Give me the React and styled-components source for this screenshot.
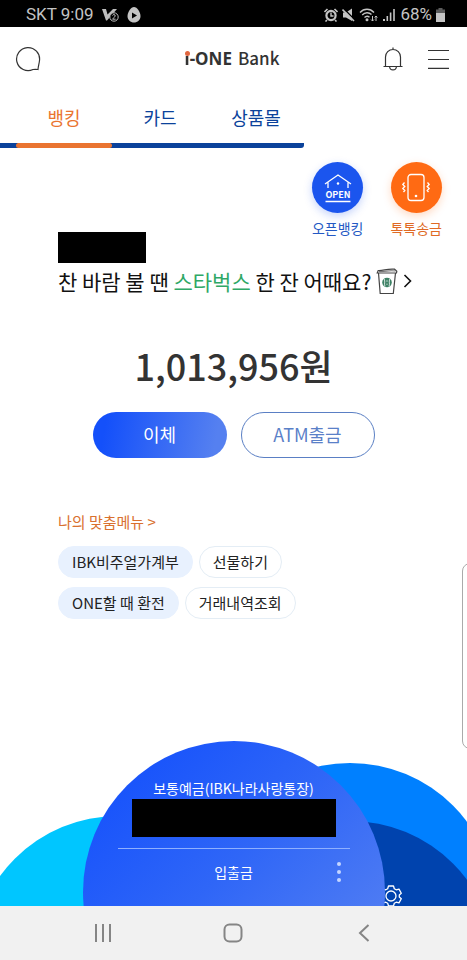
import React, { useState } from 'react'
import styled, { createGlobalStyle } from 'styled-components'

const tabs = ['뱅킹', '카드', '상품몰']

const menuRows = [
  [
    { label: 'IBK비주얼가계부', filled: true },
    { label: '선물하기', filled: false },
  ],
  [
    { label: 'ONE할 때 환전', filled: true },
    { label: '거래내역조회', filled: false },
  ],
]

export default function App() {
  const [active, setActive] = useState('뱅킹')

  return (
    <>
      <GlobalStyle />
      <Page>
        <StatusBar>
          <StatusGroup $gap={8}>
            <span>SKT 9:09</span>
            <VaccineIcon />
            <PlayIcon />
          </StatusGroup>
          <StatusGroup $gap={4}>
            <AlarmIcon />
            <MuteIcon />
            <WifiIcon />
            <SignalIcon />
            <span>68%</span>
            <BatteryIcon />
          </StatusGroup>
        </StatusBar>

        <Header>
          <IconButton aria-label="상담">
            <svg width="26" height="26" viewBox="0 0 26 26" fill="none" stroke="#333" strokeWidth="1.2">
              <path d="M23 23.500 C21.500 23.300 19.800 23.200 18 23.500 A11.500 11.500 0 1 1 24.500 14.500 C24.200 17.500 23.200 20.500 23 23.500 Z" />
            </svg>
          </IconButton>
          <Logo>
            <b><LogoI>i</LogoI>-ONE</b> <LogoBank>Bank</LogoBank>
          </Logo>
          <HeaderRight>
            <IconButton aria-label="알림">
              <svg width="20" height="24" viewBox="0 0 20 24" fill="none" stroke="#333" strokeWidth="1.2">
                <path d="M10 0.500 V2.500 M2.500 19.500 V10 A7.500 7.500 0 0 1 17.500 10 V19.500 M0.500 19.500 H19.500 M6.500 19.500 C7 24 13 24 13.500 19.500" />
              </svg>
            </IconButton>
            <IconButton aria-label="전체메뉴">
              <svg width="22" height="20" viewBox="0 0 22 20" stroke="#333" strokeWidth="1.2">
                <path d="M1 1.500 H22 M1 10.500 H22 M1 19.300 H22" />
              </svg>
            </IconButton>
          </HeaderRight>
        </Header>

        <Tabs>
          {tabs.map((tab) => (
            <Tab key={tab} $active={tab === active} onClick={() => setActive(tab)}>
              {tab}
            </Tab>
          ))}
        </Tabs>

        <Main>
          <TopRow>
            <HiddenName />
            <Shortcuts>
              <Shortcut $color="#2459c4">
                <ShortcutCircle $color="#1b55ee">
                  <OpenBankIcon />
                </ShortcutCircle>
                오픈뱅킹
              </Shortcut>
              <Shortcut $color="#e06a25">
                <ShortcutCircle $color="#ff6a13">
                  <ShakePhoneIcon />
                </ShortcutCircle>
                톡톡송금
              </Shortcut>
            </Shortcuts>
          </TopRow>

          <Message href="#event">
            <span>찬 바람 불 땐 <Brand>스타벅스</Brand> 한 잔 어때요?</span>
            <CupIcon />
            <svg width="9" height="14" viewBox="0 0 9 14" fill="none" stroke="#111" strokeWidth="1.6">
              <path d="M1.500 1 L7.500 7 L1.500 13" />
            </svg>
          </Message>

          <Amount>1,013,956원</Amount>
          <Actions>
            <ActionButton $primary>이체</ActionButton>
            <ActionButton>ATM출금</ActionButton>
          </Actions>

          <MyMenu>
            <MyMenuTitle href="#menu">나의 맞춤메뉴 &gt;</MyMenuTitle>
            {menuRows.map((row, i) => (
              <ChipRow key={i}>
                {row.map((item) => (
                  <Chip key={item.label} $filled={item.filled}>{item.label}</Chip>
                ))}
              </ChipRow>
            ))}
          </MyMenu>
        </Main>

        <Wheel>
          <Circle $x={-116} $top={75} $size={292} $bg="#00c6ff" />
          <Circle $x={116} $top={22} $size={292} $bg="#0080ff" />
          <Circle $x={116} $top={80} $size={292} $bg="#0043ae" />
          <SettingsButton aria-label="설정">
            <GearIcon />
          </SettingsButton>
          <Circle $x={0} $top={0} $size={302} $bg="linear-gradient(135deg, #1a55fb 15%, #2f66f7 45%, #5580f2 85%)" />
          <Account>
            <AccountName>보통예금(IBK나라사랑통장)</AccountName>
            <HiddenNumber />
            <AccountFoot>
              <span>입출금</span>
              <MoreButton aria-label="더보기">
                <svg width="6" height="22" viewBox="0 0 6 22" fill="#c5d6ff">
                  <circle cx="3" cy="3" r="2" />
                  <circle cx="3" cy="11" r="2" />
                  <circle cx="3" cy="19" r="2" />
                </svg>
              </MoreButton>
            </AccountFoot>
          </Account>
        </Wheel>

        <SystemNav>
          <IconButton aria-label="최근 앱">
            <svg width="18" height="20" viewBox="0 0 18 20" stroke="#858585" strokeWidth="2">
              <path d="M2 1 V19 M9 1 V19 M16 1 V19" />
            </svg>
          </IconButton>
          <IconButton aria-label="홈">
            <svg width="20" height="20" viewBox="0 0 20 20" fill="none" stroke="#858585" strokeWidth="2">
              <rect x="1.500" y="1.500" width="17" height="17" rx="5" />
            </svg>
          </IconButton>
          <IconButton aria-label="뒤로">
            <svg width="12" height="20" viewBox="0 0 12 20" fill="none" stroke="#858585" strokeWidth="2">
              <path d="M10.500 2 L2 10 L10.500 18" />
            </svg>
          </IconButton>
        </SystemNav>

        <EdgeHandle />
      </Page>
    </>
  )
}

function VaccineIcon() {
  return (
    <svg width="17" height="14" viewBox="0 0 17 14" fill="none" stroke="#bdbdbd">
      <path d="M0 1 H4 L5.500 6.500 L11 1 H15 L5 12.500 H4 Z" fill="#bdbdbd" stroke="none" />
      <circle cx="12" cy="9" r="4.200" fill="#000" />
      <path d="M10.500 7.500 C11 6 13.500 6.300 13.200 8 C13 9.200 11 10 10.500 11.200 H13.600" />
    </svg>
  )
}

function PlayIcon() {
  return (
    <svg width="14" height="16" viewBox="0 0 14 16">
      <path d="M7 0 C10 0 13.500 5 13.500 9 C13.500 13 10.500 15.500 7 15.500 C3.500 15.500 0.500 13 0.500 9 C0.500 5 4 0 7 0 Z" fill="#c4c4c4" />
      <path d="M5 5.500 L10 8.500 L5 11.500 Z" fill="#000" />
    </svg>
  )
}

function AlarmIcon() {
  return (
    <svg width="14" height="14" viewBox="0 0 14 14">
      <circle cx="7" cy="7.500" r="4.600" fill="none" stroke="#c4c4c4" strokeWidth="2.200" />
      <path d="M0.500 4 L3.500 1 M13.500 4 L10.500 1 M3 12 L1.500 13.500 M11 12 L12.500 13.500" stroke="#c4c4c4" strokeWidth="1.600" />
      <path d="M7 4.500 V8 H9.500" fill="none" stroke="#c4c4c4" strokeWidth="1.400" />
    </svg>
  )
}

function MuteIcon() {
  return (
    <svg width="13" height="14" viewBox="0 0 13 14">
      <path d="M1 4.500 H4 L10 0.500 V13 L4 9.500 H1 Z" fill="#c4c4c4" />
      <path d="M1.500 0.500 L13 12" stroke="#000" strokeWidth="1.500" />
      <path d="M0.500 1.500 L12 13" stroke="#c4c4c4" strokeWidth="1.600" />
    </svg>
  )
}

function WifiIcon() {
  return (
    <svg width="19" height="14" viewBox="0 0 19 14" fill="none" stroke="#c4c4c4" strokeWidth="1.400">
      <path d="M1 4.500 C5 0.200 11 0.200 15 4.500 M3.200 7 C6 4 10 4 12.500 6.600 M5.500 9.500 C7 8 9 8 10.500 9.300" />
      <circle cx="8" cy="11.800" r="0.800" fill="#c4c4c4" />
      <path d="M13.500 8 V13 M12 11.500 L13.500 13 L15 11.500 M17 13 V8 M15.700 9.500 L17 8 L18.300 9.500" strokeWidth="1" />
    </svg>
  )
}

function SignalIcon() {
  return (
    <svg width="14" height="14" viewBox="0 0 14 14" fill="#c4c4c4">
      <path d="M1 11 h2 v2 h-2 z M4.500 8 h1.600 v5 h-1.600 z M7.800 4.500 h1.600 v8.500 h-1.600 z M11.200 1 h1.600 v12 h-1.600 z" />
    </svg>
  )
}

function BatteryIcon() {
  return (
    <svg width="9" height="14" viewBox="0 0 9 14">
      <path d="M2.500 0 H6.500 V1.500 H9 V5 H0 V1.500 H2.500 Z" fill="#5c5c5c" />
      <path d="M0 5 H9 V14 H0 Z" fill="#c4c4c4" />
    </svg>
  )
}

function OpenBankIcon() {
  return (
    <svg width="28" height="30" viewBox="0 0 28 30" fill="none" stroke="#fff" strokeWidth="1.300">
      <path d="M1 11 L14 2 L27 11 M4 9.500 V15 M24 9.500 V15 M1.500 28.500 H26.500" />
      <circle cx="14" cy="10.500" r="1.200" fill="#fff" stroke="none" />
      <text x="14" y="24.500" textAnchor="middle" fontFamily="'Noto Sans CJK KR', sans-serif" fontSize="9" fontWeight="700" fill="#fff" stroke="none">OPEN</text>
    </svg>
  )
}

function ShakePhoneIcon() {
  return (
    <svg width="30" height="29" viewBox="0 0 30 29" fill="none" stroke="#fff" strokeWidth="1.300">
      <rect x="7" y="1.500" width="16" height="26" rx="3" />
      <circle cx="15" cy="23" r="1.300" fill="#fff" stroke="none" />
      <path d="M3.500 9.500 L1.800 11.500 L3.800 13.500 L1.800 15.500 L3.800 17.500 L2.500 19 M26.500 9.500 L28.200 11.500 L26.200 13.500 L28.200 15.500 L26.200 17.500 L27.500 19" />
    </svg>
  )
}

function CupIcon() {
  return (
    <svg width="22" height="27" viewBox="0 0 22 27" fill="none" stroke="#444" strokeWidth="1.200">
      <path d="M2.500 5 L4.200 25.500 H17.300 L19.500 5" fill="#fff" />
      <path d="M1.200 5 L2.200 2.500 C8 2.800 10 0.600 18.500 1.200 L20.800 3.200 L20.500 4.800 Z" fill="#fff" />
      <path d="M3 3.500 C10 3.800 12 2 19.500 3" stroke="#777" />
      <circle cx="11" cy="14.500" r="4.800" fill="#3d8064" stroke="none" />
      <path d="M8.200 11 C9.500 14 7.800 15.500 9 18.500 M13.800 11 C12.500 14 14.200 15.500 13 18.500" stroke="#fff" strokeWidth="0.800" />
      <path d="M10 13 H12 M10.200 16.200 H11.800" stroke="#e6f2ec" strokeWidth="0.700" />
    </svg>
  )
}

function GearIcon() {
  return (
    <svg width="22" height="22" viewBox="0 0 22 22" fill="none" stroke="#fff" strokeWidth="1.300">
      <path d="M8.500 1 H13.500 L14.300 3.700 L16.200 4.800 L19 4.100 L21.300 8.200 L19.300 10 V12 L21.300 13.800 L19 17.900 L16.200 17.200 L14.300 18.300 L13.500 21 H8.500 L7.700 18.300 L5.800 17.200 L3 17.900 L0.700 13.800 L2.700 12 V10 L0.700 8.200 L3 4.100 L5.800 4.800 L7.700 3.700 Z" strokeLinejoin="round" />
      <circle cx="11" cy="11" r="5" />
    </svg>
  )
}

const GlobalStyle = createGlobalStyle`
* {
  box-sizing: border-box;
}
body {
  margin: 0;
  background: #fff;
  font-family: 'Noto Sans CJK KR', sans-serif;
  color: #222;
}
button {
  margin: 0;
  padding: 0;
  border: none;
  background: none;
  font: inherit;
  color: inherit;
  cursor: pointer;
}
a {
  text-decoration: none;
}
svg {
  display: block;
  flex: none;
}
`
const Page = styled.div`
position: relative;
display: flex;
flex-direction: column;
min-height: 100vh;
overflow: hidden;
`
const StatusBar = styled.div`
display: flex;
justify-content: space-between;
align-items: center;
height: 27px;
padding: 2px 22px 0 26px;
background: #000;
color: #c4c4c4;
font-family: Roboto, sans-serif;
font-size: 17px;
line-height: 25px;
`
const StatusGroup = styled.div`
display: flex;
align-items: center;
gap: ${(p) => p.$gap}px;
`
const Header = styled.header`
display: grid;
grid-template-columns: 1fr auto 1fr;
align-items: center;
height: 63px;
padding: 0 18px 0 15px;
`
const IconButton = styled.button`
display: flex;
justify-self: start;
`
const HeaderRight = styled.div`
display: flex;
align-items: center;
justify-content: flex-end;
gap: 24px;
`
const Logo = styled.h1`
display: flex;
align-items: baseline;
gap: 6px;
margin: 0;
font-family: 'Noto Sans', sans-serif;
font-size: 17px;
font-weight: 500;
line-height: 24px;
color: #333;
`
/* the tittle is swapped for a round orange dot */
const LogoI = styled.span`
position: relative;
background: linear-gradient(transparent 9px, #333 9px);
background-clip: text;
color: transparent;

&::before {
  content: '';
  position: absolute;
  top: 4px;
  left: 0;
  width: 5px;
  height: 5px;
  border-radius: 50%;
  background: #e0663f;
}
`
const LogoBank = styled.span`
font-family: 'Noto Sans CJK KR', sans-serif;
`
const Tabs = styled.nav`
display: flex;
align-self: flex-start;
padding-left: 16px;
height: 58px;
background: linear-gradient(#0b429b, #0b429b) bottom / 100% 5px no-repeat;
border-radius: 0 0 3px 0;
`
const Tab = styled.button`
position: relative;
width: 96px;
padding-bottom: 5px;
font-size: 18px;
color: ${(p) => (p.$active ? '#ea7430' : '#0b429b')};

&::after {
  content: '';
  position: absolute;
  left: 0;
  right: 0;
  bottom: 0;
  height: 5px;
  border-radius: 3px;
  background: ${(p) => (p.$active ? '#ea7430' : 'transparent')};
}
`
const Main = styled.main`
flex: 1;
display: flex;
flex-direction: column;
padding-top: 14px;
padding-bottom: 40px;
`
const TopRow = styled.div`
display: flex;
justify-content: space-between;
align-items: flex-start;
padding: 0 25px 0 58px;
`
const Shortcuts = styled.div`
display: flex;
gap: 27px;
`
const Shortcut = styled.button`
display: flex;
flex-direction: column;
align-items: center;
gap: 5px;
font-size: 14px;
line-height: 20px;
color: ${(p) => p.$color};
`
const ShortcutCircle = styled.span`
display: flex;
justify-content: center;
align-items: center;
width: 51px;
height: 51px;
border-radius: 50%;
background: ${(p) => p.$color};
box-shadow: 0 3px 8px ${(p) => p.$color}40;
`
const HiddenName = styled.div`
width: 88px;
height: 31px;
margin-top: 70px;
background: #000;
`
const Message = styled.a`
display: flex;
align-items: center;
gap: 5px;
margin-top: 2px;
padding-left: 58px;
font-size: 21px;
line-height: 32px;
white-space: nowrap;
color: #111;
`
const Brand = styled.span`
color: #2fa866;
`
const Amount = styled.p`
margin: 43px 0 0;
text-align: center;
font-size: 36px;
font-weight: 500;
line-height: 50px;
color: #333;
`
const Actions = styled.div`
display: flex;
justify-content: center;
gap: 14px;
margin-top: 22px;
`
const ActionButton = styled.button`
width: 134px;
height: 46px;
padding-bottom: 2px;
border-radius: 23px;
font-size: 18px;
color: ${(p) => (p.$primary ? '#fff' : '#5a80c8')};
background: ${(p) => (p.$primary ? 'linear-gradient(100deg, #1450fa 10%, #5580f0 90%)' : '#fff')};
border: ${(p) => (p.$primary ? 'none' : '1px solid #5a7fc4')};
`
const MyMenu = styled.section`
display: flex;
flex-direction: column;
align-items: flex-start;
gap: 9px;
margin-top: 52px;
padding-left: 58px;
`
const MyMenuTitle = styled.a`
margin-bottom: 3px;
font-size: 15px;
line-height: 24px;
color: #d9712f;
`
const ChipRow = styled.div`
display: flex;
gap: 6px;
`
const Chip = styled.button`
height: 32px;
padding: 0 13px;
border-radius: 16px;
border: 1px solid ${(p) => (p.$filled ? '#e8f1fe' : '#e4edf5')};
background: ${(p) => (p.$filled ? '#e8f1fe' : '#fff')};
font-size: 15px;
line-height: 30px;
color: #222;
`
const Wheel = styled.section`
position: relative;
height: 165px;
overflow: hidden;
`
/* discs are placed around the centre of the screen */
const Circle = styled.div`
position: absolute;
top: ${(p) => p.$top}px;
left: calc(50% + ${(p) => p.$x - p.$size / 2}px);
width: ${(p) => p.$size}px;
height: ${(p) => p.$size}px;
border-radius: 50%;
background: ${(p) => p.$bg};
`
const SettingsButton = styled.button`
position: absolute;
top: 144px;
left: calc(50% + 146px);
`
const Account = styled.div`
position: relative;
display: flex;
flex-direction: column;
align-items: center;
width: 232px;
margin: 0 auto;
padding-top: 36px;
color: #fff;
font-size: 14px;
line-height: 22px;
`
const AccountName = styled.span`
white-space: nowrap;
`
const HiddenNumber = styled.div`
width: 204px;
height: 38px;
background: #000;
`
const AccountFoot = styled.div`
display: grid;
grid-template-columns: 1fr auto 1fr;
align-items: center;
width: 100%;
margin-top: 11px;
padding: 12px 8px 0;
border-top: 1px solid #8fb0ff;

span {
  grid-column: 2;
}
`
const MoreButton = styled.button`
justify-self: end;
`
const SystemNav = styled.footer`
display: grid;
grid-template-columns: repeat(3, 1fr);
align-items: center;
height: 54px;
padding: 0 8%;
background: #f1f1f1;

button {
  justify-self: center;
}
`
const EdgeHandle = styled.div`
position: absolute;
top: 563px;
right: -4px;
width: 9px;
height: 186px;
border: 1px solid #aaa;
border-radius: 8px 0 0 8px;
`
